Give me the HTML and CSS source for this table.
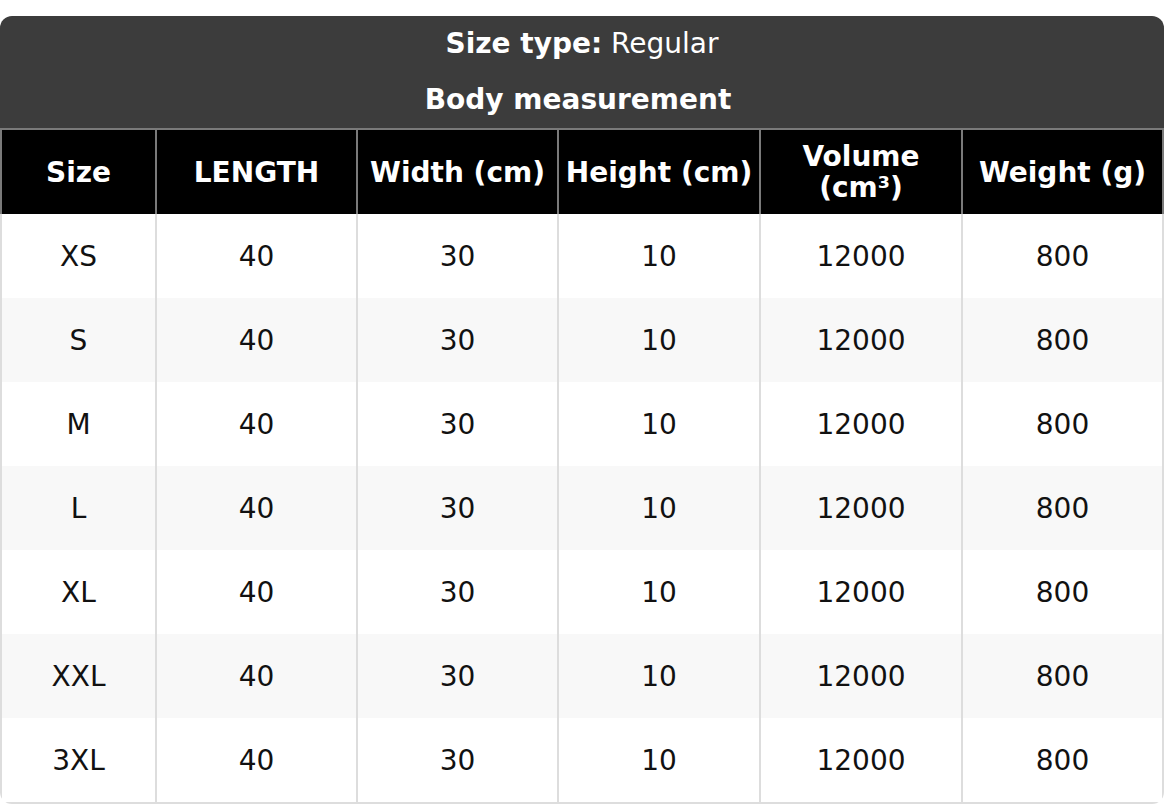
FILE: index.html
```html
<!DOCTYPE html>
<html lang="en">
<head>
<meta charset="utf-8">
<title>Size chart</title>
<link rel="stylesheet" href="styles.css">
</head>
<body>
<div class="card">
  <div class="caption">
    <div class="caption-line"><strong>Size type:</strong> Regular</div>
    <div class="caption-line caption-title">Body measurement</div>
  </div>
  <table class="chart">
    <colgroup>
      <col class="col-size">
      <col class="col-a"><col class="col-a"><col class="col-b"><col class="col-b"><col>
    </colgroup>
    <thead>
      <tr>
        <th>Size</th>
        <th>LENGTH</th>
        <th>Width (cm)</th>
        <th>Height (cm)</th>
        <th>Volume<br>(cm³)</th>
        <th>Weight (g)</th>
      </tr>
    </thead>
    <tbody>
      <tr><td>XS</td><td>40</td><td>30</td><td>10</td><td>12000</td><td>800</td></tr>
      <tr><td>S</td><td>40</td><td>30</td><td>10</td><td>12000</td><td>800</td></tr>
      <tr><td>M</td><td>40</td><td>30</td><td>10</td><td>12000</td><td>800</td></tr>
      <tr><td>L</td><td>40</td><td>30</td><td>10</td><td>12000</td><td>800</td></tr>
      <tr><td>XL</td><td>40</td><td>30</td><td>10</td><td>12000</td><td>800</td></tr>
      <tr><td>XXL</td><td>40</td><td>30</td><td>10</td><td>12000</td><td>800</td></tr>
      <tr><td>3XL</td><td>40</td><td>30</td><td>10</td><td>12000</td><td>800</td></tr>
    </tbody>
  </table>
</div>
</body>
</html>
```

FILE: styles.css
```css
html, body {
  margin: 0;
  padding: 0;
  background: #ffffff;
}

body {
  padding-top: 16px;
  font-family: "DejaVu Sans", "Liberation Sans", sans-serif;
  font-size: 28px;
  color: #111111;
}

.card {
  width: 1164px;
  border-radius: 12px;
  overflow: hidden;
  background: #ffffff;
}

.caption {
  background: #3c3c3c;
  color: #ffffff;
  text-align: center;
}

.caption-line {
  height: 56px;
  line-height: 56px;
}

.caption-line strong,
.caption-title {
  font-weight: bold;
}

.caption-title {
  padding-right: 8px;
}

.chart {
  width: 1164px;
  table-layout: fixed;
  border-collapse: separate;
  border-spacing: 0;
}

.col-size {
  width: 155px;
}

.col-a {
  width: 201px;
}

.col-b {
  width: 202px;
}

.chart th {
  background: #000000;
  color: #ffffff;
  font-weight: bold;
  height: 84px;
  padding: 0 2px;
  line-height: 31px;
  border-top: 2px solid #7a7a7a;
  border-left: 2px solid #7a7a7a;
  vertical-align: middle;
  text-align: center;
  white-space: nowrap;
}

.chart th:last-child {
  border-right: 2px solid #7a7a7a;
}

.chart td {
  height: 84px;
  padding: 0;
  text-align: center;
  vertical-align: middle;
  border-left: 2px solid #dddddd;
}

.chart td:last-child {
  border-right: 2px solid #dddddd;
}

.chart tbody tr:nth-child(even) td {
  background: #f8f8f8;
}

.chart tbody tr:last-child td {
  border-bottom: 2px solid #dddddd;
}
```
